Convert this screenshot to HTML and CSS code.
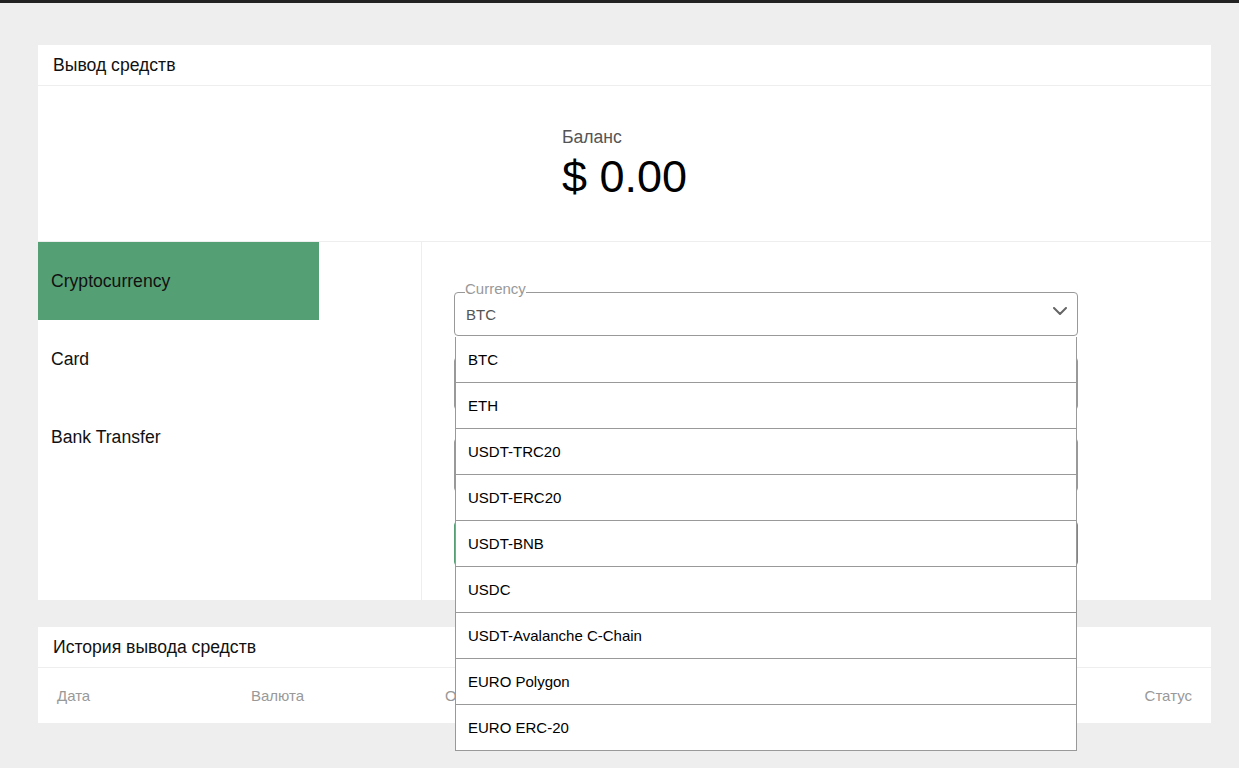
FILE: index.html
```html
<!DOCTYPE html>
<html lang="ru">
<head>
<meta charset="utf-8">
<title>Вывод средств</title>
<link rel="stylesheet" href="styles.css">
</head>
<body>
<div class="topbar"></div>
<main class="page">
  <section class="card">
    <div class="card-header">Вывод средств</div>
    <div class="balance">
      <div class="balance-box">
        <div class="balance-label">Баланс</div>
        <div class="balance-value">$ 0.00</div>
      </div>
    </div>
    <div class="withdraw">
      <nav class="tabs">
        <div class="tab active">Cryptocurrency</div>
        <div class="tab">Card</div>
        <div class="tab">Bank Transfer</div>
      </nav>
      <div class="form">
        <div class="select-wrap">
          <fieldset class="select">
            <legend>Currency</legend>
            <div class="select-value">
              <span>BTC</span>
              <svg class="chevron" width="14" height="8" viewBox="0 0 14 8"><path d="M1 1 L7 7 L13 1" fill="none" stroke="#666" stroke-width="2" stroke-linecap="round" stroke-linejoin="round"/></svg>
            </div>
          </fieldset>
          <ul class="dropdown">
            <li>BTC</li>
            <li>ETH</li>
            <li>USDT-TRC20</li>
            <li>USDT-ERC20</li>
            <li>USDT-BNB</li>
            <li>USDC</li>
            <li>USDT-Avalanche C-Chain</li>
            <li>EURO Polygon</li>
            <li>EURO ERC-20</li>
          </ul>
        </div>
        <div class="input input-address"></div>
        <div class="input input-amount"></div>
        <button class="submit" type="button">Вывести</button>
      </div>
    </div>
  </section>

  <section class="card history">
    <div class="card-header">История вывода средств</div>
    <div class="history-head">
      <span class="col">Дата</span>
      <span class="col">Валюта</span>
      <span class="col">Объём</span>
      <span class="col status">Статус</span>
    </div>
  </section>
</main>
</body>
</html>
```

FILE: styles.css
```css
* { box-sizing: border-box; }

html, body {
  margin: 0;
  padding: 0;
  background: #eeeeee;
  font-family: "Liberation Sans", Arial, sans-serif;
  color: #111;
}

.topbar {
  height: 3px;
  background: #222222;
}

.page {
  padding: 42px 28px 45px 38px;
  min-height: 765px;
}

.card {
  background: #fff;
}

.card-header {
  height: 41px;
  padding: 0 15px;
  display: flex;
  align-items: center;
  font-size: 17.6px;
  color: #111;
  border-bottom: 1px solid #eeeeee;
}

.balance {
  height: 156px;
  border-bottom: 1px solid #eeeeee;
  display: flex;
  justify-content: center;
  padding-top: 41px;
}

.balance-box {
  text-align: left;
}

.balance-label {
  font-size: 17.6px;
  line-height: 20px;
  color: #555;
}

.balance-value {
  font-size: 45px;
  line-height: 52px;
  color: #000;
  margin-top: 4px;
}

.withdraw {
  display: flex;
  height: 358px;
}

.tabs {
  width: 384px;
  border-right: 1px solid #eeeeee;
}

.tab {
  width: 281px;
  height: 78px;
  padding-left: 13px;
  display: flex;
  align-items: center;
  font-size: 17.6px;
  color: #111;
}

.tab.active {
  background: #559f75;
}

.form {
  flex: 1;
  padding: 39px 0 0 32px;
}

.select-wrap {
  position: relative;
  width: 624px;
}

.select {
  margin: 0;
  padding: 0 10px 10px 10px;
  border: 1px solid #999;
  border-radius: 4px;
  width: 624px;
}

.select legend {
  padding: 0 0 6px 0;
  font-size: 15px;
  line-height: 16px;
  color: #999;
}

.select-value {
  height: 22px;
  display: flex;
  align-items: center;
  justify-content: space-between;
  font-size: 15px;
  color: #555;
  padding-left: 1px;
}

.chevron {
  margin-top: -6px;
}

.dropdown {
  position: absolute;
  z-index: 10;
  top: calc(100% + 1px);
  left: 1px;
  right: 1px;
  margin: 0;
  padding: 0;
  list-style: none;
  background: #fff;
  border-left: 1px solid #999;
  border-right: 1px solid #999;
}

.dropdown li {
  height: 46px;
  padding-left: 12px;
  display: flex;
  align-items: center;
  font-size: 15px;
  color: #000;
  border-bottom: 1px solid #999;
}

.input {
  width: 624px;
  border: 1px solid #999;
  border-radius: 4px;
}

.input-address {
  height: 53px;
  margin-top: 21px;
}

.input-amount {
  height: 54px;
  margin-top: 28px;
}

.submit {
  display: block;
  width: 624px;
  height: 45px;
  margin-top: 29px;
  border: 1px solid #559f75;
  border-radius: 4px;
  background: #fff;
  color: #559f75;
  font-family: inherit;
  font-size: 15px;
}

.history {
  margin-top: 27px;
}

.history-head {
  height: 55px;
  padding: 0 19px;
  display: flex;
  align-items: center;
  font-size: 15px;
  color: #999;
}

.history-head .col {
  width: 194px;
}

.history-head .status {
  width: auto;
  margin-left: auto;
}
```
